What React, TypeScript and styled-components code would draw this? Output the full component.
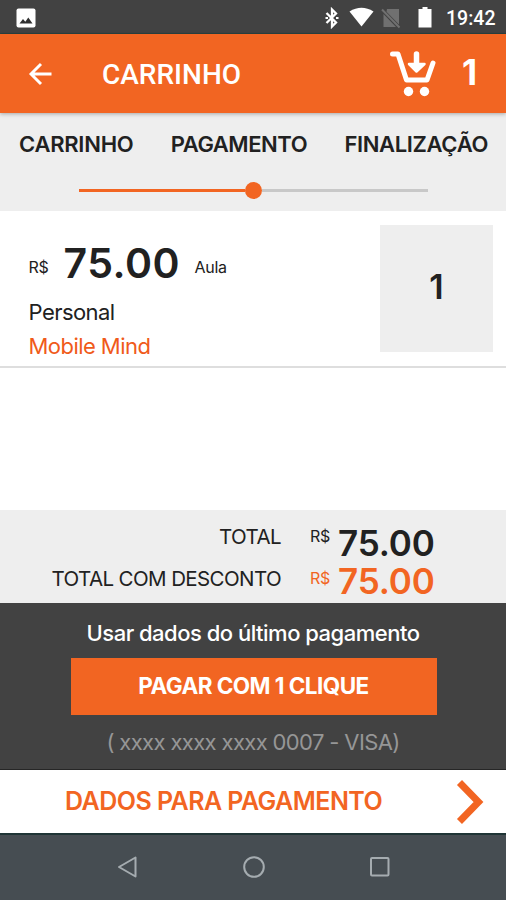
import React from 'react';
import styled, { createGlobalStyle } from 'styled-components';

const orange = '#f26522';

const GlobalStyle = createGlobalStyle`
  * { box-sizing: border-box; }
  body { margin: 0; background: #fff; }
`;

const Screen = styled.main`
  width: 506px;
  height: 900px;
  display: flex;
  flex-direction: column;
  overflow: hidden;
  background: #fff;
  color: #212121;
  font-family: Inter, 'Noto Sans', sans-serif;
  white-space: nowrap;
`;

const StatusBar = styled.div`
  height: 34px;
  flex: none;
  display: flex;
  align-items: center;
  padding: 2px 11px 0 16px;
  background: #424242;
  border-bottom: 1px solid #2c4240;
`;

const StatusIcons = styled.div`
  display: flex;
  align-items: center;
  margin-left: auto;
`;

const Clock = styled.span`
  width: 49px;
  margin-left: 14px;
  padding-top: 3px;
  color: #fff;
  font: 500 19.5px/22px Roboto, sans-serif;
`;

const Header = styled.header`
  height: 79px;
  flex: none;
  position: relative;
  display: flex;
  align-items: center;
  padding: 0 24px 0 28px;
  background: ${orange};
  color: #fff;
  box-shadow: 0 1px 4px rgba(0, 0, 0, 0.3);
`;

const Title = styled.h1`
  flex: 1;
  margin: 2px 0 0 49px;
  font: 500 28px/32px Roboto, sans-serif;
`;

const CartCount = styled.span`
  width: 20px;
  margin: 0 0 3px 25px;
  font-size: 35px;
  line-height: 40px;
  font-weight: 700;
`;

const Steps = styled.nav`
  height: 98px;
  flex: none;
  padding-top: 18px;
  background: #eee;
`;

const StepNames = styled.div`
  display: flex;
  justify-content: space-between;
  padding: 0 18px 0 19px;
`;

const StepName = styled.span<{ $spacing: number }>`
  font-size: 22px;
  line-height: 26px;
  font-weight: 600;
  letter-spacing: ${(p) => p.$spacing}px;
`;

const Track = styled.div`
  display: flex;
  align-items: center;
  margin: 25px 78px 0 79px;
  height: 17px;
`;

const Segment = styled.div<{ $done?: boolean }>`
  flex: 1;
  height: 3px;
  background: ${(p) => (p.$done ? orange : '#c8c8c8')};
`;

const Knob = styled.div`
  width: 17px;
  height: 17px;
  border-radius: 50%;
  background: ${orange};
`;

const CartItem = styled.section`
  height: 157px;
  flex: none;
  display: flex;
  justify-content: space-between;
  padding: 14px 13px 0 28.5px;
  border-bottom: 2px solid #dedede;
`;

const PriceLine = styled.div`
  display: flex;
  align-items: center;
  height: 76px;
`;

const Currency = styled.span`
  width: 35px;
  padding-top: 8px;
  font-size: 16px;
  letter-spacing: -0.3px;
`;

const Price = styled.strong`
  width: 131px;
  font-size: 41px;
  font-weight: 600;
  letter-spacing: 0.5px;
`;

const Unit = styled.span`
  padding-top: 8px;
  font-size: 16px;
  letter-spacing: -0.3px;
`;

const ItemText = styled.div<{ $accent?: boolean }>`
  font-size: 22px;
  line-height: 34px;
  letter-spacing: -0.55px;
  color: ${(p) => (p.$accent ? '#f05a1a' : 'inherit')};
  margin-top: ${(p) => (p.$accent ? 0 : -6)}px;
`;

const Quantity = styled.div`
  width: 113px;
  height: 127px;
  display: grid;
  place-items: center;
  padding-bottom: 3px;
  background: #eee;
  font-size: 34px;
  line-height: 40px;
  font-weight: 600;
`;

const Totals = styled.section`
  height: 93px;
  flex: none;
  margin-top: auto;
  padding-top: 12px;
  background: #eee;
`;

const TotalRow = styled.div<{ $lift: number; $accent?: boolean }>`
  display: grid;
  grid-template-columns: 281px 28px 1fr;
  align-items: center;
  height: 38px;

  & > :not(strong) { padding-bottom: ${(p) => p.$lift * 2}px; }
  & > :not(:first-child) { color: ${(p) => (p.$accent ? orange : 'inherit')}; }
`;

const TotalLabel = styled.span`
  text-align: right;
  font-size: 20.5px;
  letter-spacing: -0.6px;
`;

const TotalCurrency = styled.span`
  padding-left: 29px;
  width: 57px;
  font-size: 16px;
  letter-spacing: -0.3px;
`;

const TotalPrice = styled.strong`
  padding-left: 29px;
  font-size: 35px;
  font-weight: 600;
  letter-spacing: -0.1px;
`;

const QuickPay = styled.section`
  height: 167px;
  flex: none;
  display: flex;
  flex-direction: column;
  align-items: center;
  padding-top: 17px;
  background: #424242;
  border-bottom: 1px solid #262626;
`;

const Hint = styled.p`
  margin: 0;
  color: #fff;
  font-size: 22px;
  line-height: 27px;
  font-weight: 500;
  letter-spacing: -0.5px;
`;

const PayButton = styled.button`
  width: 366px;
  height: 57px;
  margin: 11px 0 14px 1px;
  padding: 0 0 1px;
  border: 0;
  background: ${orange};
  color: #fff;
  font: 700 22.5px/28px Inter, sans-serif;
  letter-spacing: -0.55px;
`;

const Card = styled.p`
  margin: 0;
  color: #969696;
  font-size: 22px;
  line-height: 27px;
  letter-spacing: -0.63px;
`;

const NextStep = styled.a`
  height: 63px;
  flex: none;
  display: flex;
  align-items: center;
  justify-content: space-between;
  padding: 0 22px 0 65px;
  background: #fff;
  color: ${orange};
`;

const NextLabel = styled.span`
  padding-bottom: 2px;
  font-size: 25px;
  line-height: 30px;
  font-weight: 600;
  letter-spacing: -0.53px;
`;

const NavBar = styled.footer`
  height: 67px;
  flex: none;
  display: flex;
  align-items: center;
  justify-content: space-between;
  padding: 0 114px 2px 115px;
  background: #464d52;
  border-top: 2px solid #1f3536;
`;

const Icon = styled.svg`
  display: block;
  flex: none;
`;

export default function App() {
  return (
    <Screen>
      <GlobalStyle />
      <StatusBar>
        <Icon width="20" height="20" viewBox="0 0 20 20">
          <rect x="0.5" y="0.5" width="19" height="19" rx="2" fill="#fff" />
          <path d="M3.5 15.5 7 11l2.300 2.700L12.300 9.500l4.200 6Z" fill="#303030" />
        </Icon>
        <StatusIcons>
          <Icon width="25" height="22" viewBox="0 0 25 22">
            <path d="M2.500 6 12 15.500 8 19.500V2.500l4 4L2.500 16" fill="none" stroke="#fff" strokeWidth="2.300" />
            <path d="M1.500 11h2.500M12 11h2.500" stroke="#fff" strokeWidth="2" />
          </Icon>
          <Icon width="26" height="22" viewBox="0 0 26 22">
            <path d="M0.500 4.500Q12.500-3 24.500 4.500L12.500 19.500Z" fill="#fff" />
          </Icon>
          <Icon width="34" height="22" viewBox="0 0 34 22">
            <path d="M12 2h12v15.500L11.500 4.800ZM8.500 7l12.500 13H8.500Z" fill="#707070" />
            <path d="M7 2.500 24.500 20.500" stroke="#707070" strokeWidth="2" />
          </Icon>
          <Icon width="23" height="22" viewBox="0 0 23 22">
            <path d="M13.500 0h5v2H22.500v18.500H9.500V2h4Z" fill="#fff" />
          </Icon>
        </StatusIcons>
        <Clock>19:42</Clock>
      </StatusBar>

      <Header>
        <Icon width="25" height="24" viewBox="0 0 25 24">
          <path d="M23.500 12H3M13 2 3 12l10 10" fill="none" stroke="#fff" strokeWidth="2.900" />
        </Icon>
        <Title>CARRINHO</Title>
        <Icon width="47" height="48" viewBox="0 0 47 48">
          <path
            d="M2.500 4h5.500l8.500 26h20.500L43 13"
            fill="none"
            stroke="#fff"
            strokeWidth="5"
            strokeLinecap="round"
            strokeLinejoin="round"
          />
          <path d="M26.500 4v13" stroke="#fff" strokeWidth="5.500" strokeLinecap="round" />
          <path d="M19 14h15.500L26.500 21.500Z" fill="#fff" stroke="#fff" strokeWidth="2.500" strokeLinejoin="round" />
          <circle cx="18.500" cy="41.500" r="4.700" fill="#fff" />
          <circle cx="34.500" cy="41.500" r="4.700" fill="#fff" />
        </Icon>
        <CartCount>1</CartCount>
      </Header>

      <Steps>
        <StepNames>
          <StepName $spacing={-0.25}>CARRINHO</StepName>
          <StepName $spacing={-0.45}>PAGAMENTO</StepName>
          <StepName $spacing={-0.35}>FINALIZAÇÃO</StepName>
        </StepNames>
        <Track>
          <Segment $done />
          <Knob />
          <Segment />
        </Track>
      </Steps>

      <CartItem>
        <div>
          <PriceLine>
            <Currency>R$</Currency>
            <Price>75.00</Price>
            <Unit>Aula</Unit>
          </PriceLine>
          <ItemText>Personal</ItemText>
          <ItemText $accent>Mobile Mind</ItemText>
        </div>
        <Quantity>1</Quantity>
      </CartItem>

      <Totals>
        <TotalRow $lift={7}>
          <TotalLabel>TOTAL</TotalLabel>
          <TotalCurrency>R$</TotalCurrency>
          <TotalPrice>75.00</TotalPrice>
        </TotalRow>
        <TotalRow $lift={3} $accent>
          <TotalLabel>TOTAL COM DESCONTO</TotalLabel>
          <TotalCurrency>R$</TotalCurrency>
          <TotalPrice>75.00</TotalPrice>
        </TotalRow>
      </Totals>

      <QuickPay>
        <Hint>Usar dados do último pagamento</Hint>
        <PayButton>PAGAR COM 1 CLIQUE</PayButton>
        <Card>( xxxx xxxx xxxx 0007 - VISA)</Card>
      </QuickPay>

      <NextStep>
        <NextLabel>DADOS PARA PAGAMENTO</NextLabel>
        <Icon width="28" height="46" viewBox="0 0 28 46">
          <path d="M3.500 3.500 22.500 23 3.500 42.500" fill="none" stroke={orange} strokeWidth="7" />
        </Icon>
      </NextStep>

      <NavBar>
        <Icon width="24" height="24" viewBox="0 0 24 24">
          <path d="M20.500 2.500v19L4 12Z" fill="none" stroke="#a5acb0" strokeWidth="2" strokeLinejoin="round" />
        </Icon>
        <Icon width="24" height="24" viewBox="0 0 24 24">
          <circle cx="12" cy="12" r="9.800" fill="none" stroke="#a5acb0" strokeWidth="2" />
        </Icon>
        <Icon width="24" height="24" viewBox="0 0 24 24">
          <rect x="3" y="3" width="17.500" height="17.500" rx="1" fill="none" stroke="#a5acb0" strokeWidth="2" />
        </Icon>
      </NavBar>
    </Screen>
  );
}
